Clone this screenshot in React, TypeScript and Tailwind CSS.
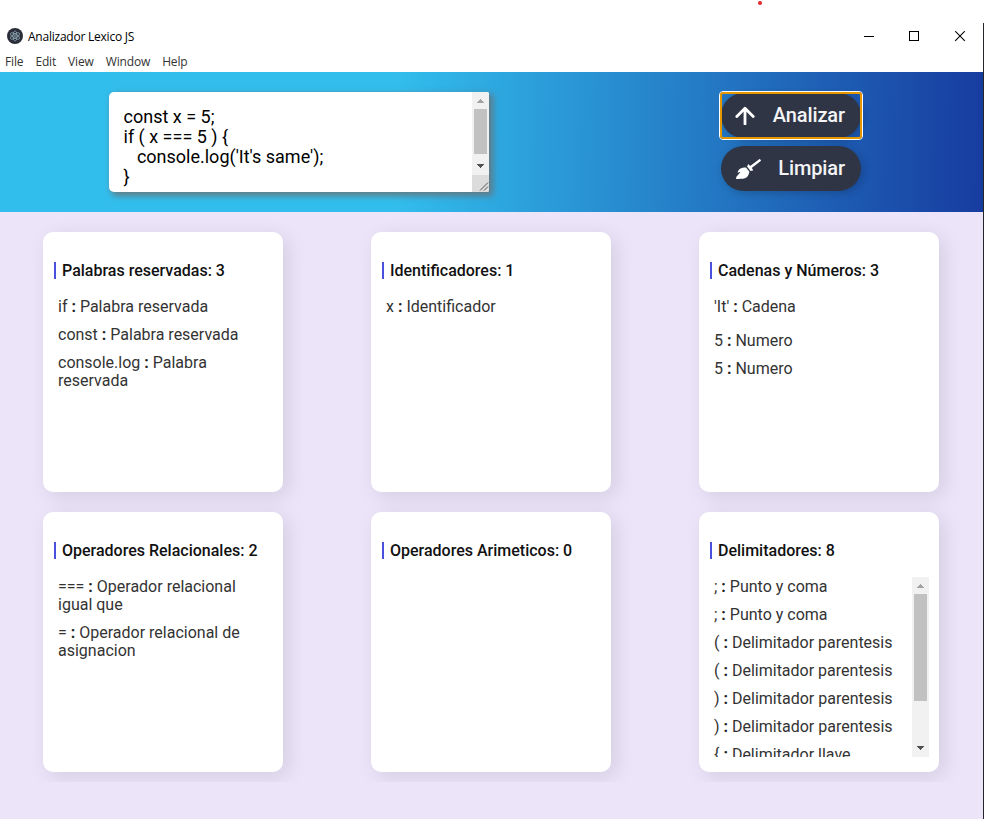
import React from "react";

const Up = () => (
  <svg width="7" height="4" viewBox="0 0 7 4" shapeRendering="crispEdges" fill="#a3a3a3">
    <path d="M3 0h1v1h1v1h1v1h1v1H0V3h1V2h1V1h1z" />
  </svg>
);
const Down = () => (
  <svg width="7" height="4" viewBox="0 0 7 4" shapeRendering="crispEdges" fill="#505050">
    <path d="M0 0h7v1H6v1H5v1H4v1H3V3H2V2H1V1H0z" />
  </svg>
);

function Scrollbar({ thumb }: { thumb: string }) {
  return (
    <div className="flex w-[17px] flex-1 flex-col items-center bg-[#f1f1f1]">
      <div className="flex h-[17px] shrink-0 items-center justify-center pt-px"><Up /></div>
      <div className={"w-[13px] shrink-0 bg-[#c1c1c1] " + thumb} />
      <div className="mt-auto flex h-[17px] shrink-0 items-center justify-center pb-[2px]"><Down /></div>
    </div>
  );
}

type Item = { token: string; kind: string; gap?: boolean };

function Card({ title, items, scroll }: { title: string; items: Item[]; scroll?: boolean }) {
  return (
    <section className="h-[260px] w-[240px] rounded-[10px] bg-white pt-[29px] pl-[11px] pr-[10px] shadow-[5px_5px_20px_rgba(0,0,0,0.1)]">
      <h2 className="flex h-[19px] items-center text-[16px] leading-[19px] font-medium text-[#111]">
        <span className="mr-[6px] h-[17px] w-[2px] bg-[#4a4fe0]" />
        {title}
      </h2>
      <div className="mt-[17px] flex h-[180px] overflow-hidden">
        <ul className="min-w-0 flex-1 pl-1 pr-3 pt-px">
          {items.map((it, i) => (
            <li key={i} className={"mb-[10px] text-[16px] leading-[18px] font-normal text-[#333] " + (it.gap ? "pb-[6px]" : "")}>
              {it.token} <b className="font-bold text-[#222]">:</b> {it.kind}
            </li>
          ))}
        </ul>
        {scroll && <div className="flex h-full flex-col"><Scrollbar thumb="h-[107px]" /></div>}
      </div>
    </section>
  );
}

const cards: { title: string; items: Item[]; scroll?: boolean }[] = [
  {
    title: "Palabras reservadas: 3",
    items: [
      { token: "if", kind: "Palabra reservada" },
      { token: "const", kind: "Palabra reservada" },
      { token: "console.log", kind: "Palabra reservada" },
    ],
  },
  { title: "Identificadores: 1", items: [{ token: "x", kind: "Identificador" }] },
  {
    title: "Cadenas y Números: 3",
    items: [
      { token: "'It'", kind: "Cadena", gap: true },
      { token: "5", kind: "Numero" },
      { token: "5", kind: "Numero" },
    ],
  },
  {
    title: "Operadores Relacionales: 2",
    items: [
      { token: "===", kind: "Operador relacional igual que" },
      { token: "=", kind: "Operador relacional de asignacion" },
    ],
  },
  { title: "Operadores Arimeticos: 0", items: [] },
  {
    title: "Delimitadores: 8",
    scroll: true,
    items: [
      { token: ";", kind: "Punto y coma" },
      { token: ";", kind: "Punto y coma" },
      { token: "(", kind: "Delimitador parentesis" },
      { token: "(", kind: "Delimitador parentesis" },
      { token: ")", kind: "Delimitador parentesis" },
      { token: ")", kind: "Delimitador parentesis" },
      { token: "{", kind: "Delimitador llave" },
      { token: "}", kind: "Delimitador llave" },
    ],
  },
];

export default function App() {
  return (
    <div className="relative h-[819px] w-[984px] overflow-hidden bg-white font-['Roboto',sans-serif]">
      <div className="absolute left-[758px] top-[1px] h-1 w-1 rounded-full bg-[#e8232a]" />
      <div className="h-[23px]" />
      <div className="h-[796px] border-r border-[#24262c]">
        <div className="flex h-[26px] items-center pl-[7px] pr-[17px]">
          <svg width="16" height="16" viewBox="0 0 16 16" fill="none">
            <circle cx="8" cy="8" r="8" fill="#2b2e3a" />
            <g stroke="#a9c9d4" strokeWidth=".7" opacity=".85">
              <ellipse cx="8" cy="8" rx="5.2" ry="2" transform="rotate(30 8 8)" />
              <ellipse cx="8" cy="8" rx="5.2" ry="2" transform="rotate(90 8 8)" />
              <ellipse cx="8" cy="8" rx="5.2" ry="2" transform="rotate(150 8 8)" />
            </g>
            <circle cx="8" cy="8" r=".8" fill="#a9c9d4" />
          </svg>
          <span className="ml-[5px] mt-[2px] font-['Open_Sans',sans-serif] text-[12px] leading-4 tracking-[-0.23px] text-black">Analizador Lexico JS</span>
          <svg className="ml-auto" width="102" height="11" viewBox="0 0 102 11" fill="none" stroke="#000">
            <path d="M0 5.5h10M45.5.5h9v9h-9z" shapeRendering="crispEdges" />
            <path d="M91.2.2l9.6 9.6M100.8.2l-9.6 9.6" strokeWidth="1.1" />
          </svg>
        </div>
        <nav className="flex h-[23px] items-center gap-3 pl-[5px] pt-[2px] font-['Open_Sans',sans-serif] text-[12px] tracking-[-0.15px] text-[#333]">
          <span>File</span><span>Edit</span><span>View</span><span>Window</span><span>Help</span>
        </nav>
        <header className="flex h-[140px] items-start bg-[linear-gradient(91deg,#32beed_0%,#32beed_40%,#173ca0_100%)] pl-[109px] pt-5">
          <div className="flex h-[100px] w-[380px] overflow-hidden rounded-[5px] rounded-r-[2px] bg-white shadow-[3px_3px_6px_1px_rgba(110,110,110,0.8)]">
            <pre className="flex-1 pl-[14.5px] pt-[15px] font-['Roboto',sans-serif] text-[18px] leading-5 text-black">{"const x = 5;\nif ( x === 5 ) {\n   console.log('It's same');\n}"}</pre>
            <div className="flex flex-col">
              <Scrollbar thumb="h-[45px]" />
              <svg width="17" height="17" viewBox="0 0 17 17" className="bg-[#dcdcdc]" fill="none" stroke="#555" strokeWidth="1">
                <path d="M8 15.5l8-8M12 15.5l4-4" />
              </svg>
            </div>
          </div>
          <div className="ml-[232px] flex flex-col gap-[8px]">
            <button className="mt-px flex h-[45px] w-[140px] items-center justify-between rounded-full bg-[#2f3545] pl-[14px] pr-4 text-[20px] font-medium tracking-[-0.1px] text-[#f4f4f6] shadow-[2px_2px_8px_rgba(0,0,0,0.2)]">
              <svg width="20" height="19" viewBox="0 0 20 19" fill="none" stroke="#fff" strokeWidth="2.8"><path d="M10 18V2.5M1.8 10.5L10 2.2l8.2 8.3" strokeLinecap="round" strokeLinejoin="round" /></svg>
              <span className="mb-[2px]">Analizar</span>
            </button>
            <button className="flex h-[45px] w-[140px] items-center justify-between rounded-full bg-[#2f3545] pl-[15px] pr-4 text-[20px] font-medium tracking-[-0.1px] text-[#f4f4f6] shadow-[2px_2px_8px_rgba(0,0,0,0.2)]">
              <svg width="25" height="20" viewBox="0 0 640 512" fill="#fff"><path d="M256.47 216.77l86.73 109.18s-16.6 102.36-76.57 150.12C206.66 523.85 0 510.19 0 510.19s3.8-23.14 11-55.43l94.62-112.17c3.97-4.7-.87-11.62-6.65-9.5l-60.4 22.09c14.44-41.66 32.72-80.04 54.6-97.47 59.97-47.76 163.3-40.94 163.3-40.94zM636.53 31.03l-19.86-25c-5.49-6.9-15.52-8.05-22.41-2.56l-232.48 177.8-34.14-42.97c-5.09-6.41-15.14-5.21-18.59 2.21l-25.33 54.55 86.73 109.18 58.8-12.45c8-1.69 11.42-11.2 6.34-17.6l-34.09-42.92 232.48-177.8c6.89-5.48 8.04-15.53 2.55-22.44z" /></svg>
              <span className="mb-[2px]">Limpiar</span>
            </button>
          </div>
          <div className="absolute left-[719px] top-[91px] h-[49px] w-[144px] rounded-[4px] border border-white p-0">
            <div className="h-full w-full rounded-[3px] border-2 border-[#e59700]" />
          </div>
        </header>
        <main className="h-[607px] bg-[#ece4f9]">
          <div className="grid h-[570px] grid-cols-[240px_240px_240px] content-start gap-x-[88px] gap-y-5 overflow-hidden pl-[43px] pt-5">
            {cards.map((c) => <Card key={c.title} {...c} />)}
          </div>
        </main>
      </div>
    </div>
  );
}
